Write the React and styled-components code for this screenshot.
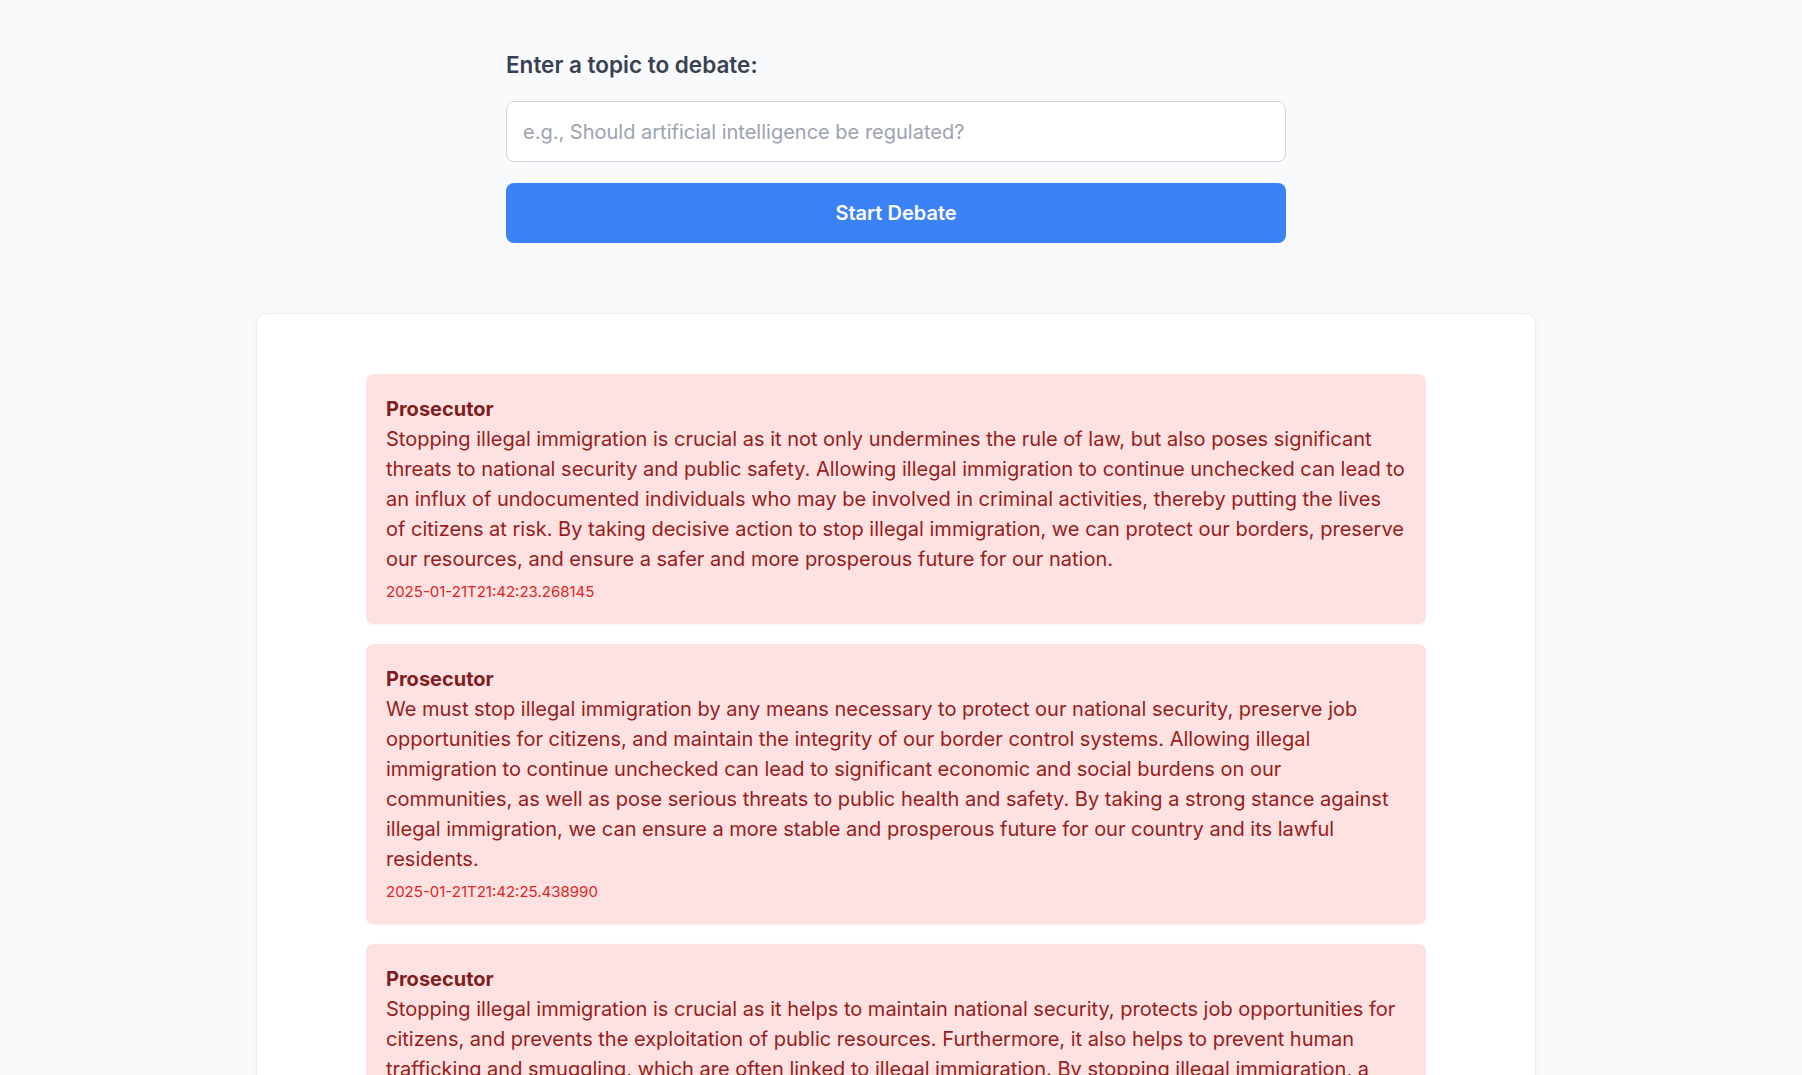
import React, { useState } from 'react'
import styled, { createGlobalStyle } from 'styled-components'

const GlobalStyle = createGlobalStyle`
  * { box-sizing: border-box; }
  body {
    margin: 0;
    background: #f9fafb;
    font-family: Inter, "Noto Sans", sans-serif;
  }
`

const Page = styled.div`
  min-height: 100vh;
  padding: 51px 10px 40px 0;
`

const Form = styled.form`
  width: 780px;
  margin: 0 auto;
  display: flex;
  flex-direction: column;
`

const Label = styled.label`
  font-size: 22.5px;
  line-height: 28px;
  font-weight: 600;
  color: #374151;
  margin-bottom: 22px;
`

const Input = styled.input`
  height: 61px;
  padding: 0 16px;
  font-size: 20px;
  font-family: inherit;
  color: #111827;
  background: #fff;
  border: 1px solid #d1d5db;
  border-radius: 8px;
  outline: none;
  &::placeholder { color: #9ca3af; }
`

const Button = styled.button`
  margin-top: 21px;
  height: 60px;
  border: none;
  border-radius: 8px;
  background: #3b82f6;
  color: #fff;
  font-family: inherit;
  font-size: 20px;
  font-weight: 600;
  cursor: pointer;
  &:hover { background: #2563eb; }
`

const Card = styled.div`
  width: 1280px;
  margin: 70px auto 0;
  background: #fff;
  border: 1px solid #eceef1;
  border-radius: 10px;
  box-shadow: 0 2px 6px rgba(0, 0, 0, 0.04);
  padding: 60px 109px 40px;
  display: flex;
  flex-direction: column;
  gap: 20px;
`

const Message = styled.div`
  background: #fee2e2;
  border-radius: 8px;
  padding: 20px 20.5px 22px 20px;
  box-shadow: 0 1px 3px rgba(0, 0, 0, 0.06);
`

const Speaker = styled.div`
  font-size: 20px;
  line-height: 30px;
  font-weight: 700;
  color: #7f1d1d;
`

const Body = styled.p`
  margin: 0;
  font-size: 20px;
  line-height: 30px;
  color: #991b1b;
`

const Stamp = styled.div`
  margin-top: 8px;
  font-size: 15px;
  line-height: 20px;
  color: #dc2626;
`

const messages = [
  {
    speaker: 'Prosecutor',
    text: 'Stopping illegal immigration is crucial as it not only undermines the rule of law, but also poses significant threats to national security and public safety. Allowing illegal immigration to continue unchecked can lead to an influx of undocumented individuals who may be involved in criminal activities, thereby putting the lives of citizens at risk. By taking decisive action to stop illegal immigration, we can protect our borders, preserve our resources, and ensure a safer and more prosperous future for our nation.',
    time: '2025-01-21T21:42:23.268145',
  },
  {
    speaker: 'Prosecutor',
    text: 'We must stop illegal immigration by any means necessary to protect our national security, preserve job opportunities for citizens, and maintain the integrity of our border control systems. Allowing illegal immigration to continue unchecked can lead to significant economic and social burdens on our communities, as well as pose serious threats to public health and safety. By taking a strong stance against illegal immigration, we can ensure a more stable and prosperous future for our country and its lawful residents.',
    time: '2025-01-21T21:42:25.438990',
  },
  {
    speaker: 'Prosecutor',
    text: 'Stopping illegal immigration is crucial as it helps to maintain national security, protects job opportunities for citizens, and prevents the exploitation of public resources. Furthermore, it also helps to prevent human trafficking and smuggling, which are often linked to illegal immigration. By stopping illegal immigration, a nation can uphold the rule of law and ensure a fair and orderly system for those who wish to enter legally.',
    time: '2025-01-21T21:42:27.512734',
  },
]

export default function App() {
  const [topic, setTopic] = useState('')
  const submit = (e) => {
    e.preventDefault()
  }
  return (
    <Page>
      <GlobalStyle />
      <Form onSubmit={submit}>
        <Label htmlFor="topic">Enter a topic to debate:</Label>
        <Input
          id="topic"
          value={topic}
          onChange={(e) => setTopic(e.target.value)}
          placeholder="e.g., Should artificial intelligence be regulated?"
        />
        <Button type="submit">Start Debate</Button>
      </Form>
      <Card>
        {messages.map((m, i) => (
          <Message key={i}>
            <Speaker>{m.speaker}</Speaker>
            <Body>{m.text}</Body>
            <Stamp>{m.time}</Stamp>
          </Message>
        ))}
      </Card>
    </Page>
  )
}
